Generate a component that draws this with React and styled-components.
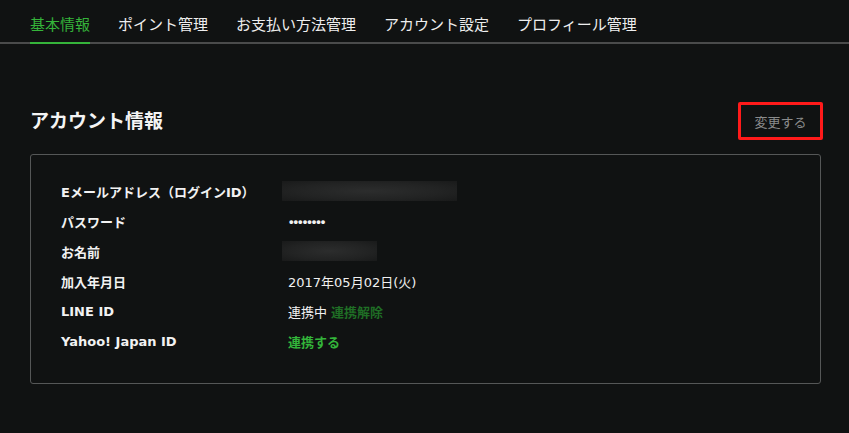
import React from "react";
import styled, { createGlobalStyle } from "styled-components";

const GlobalStyle = createGlobalStyle`
  body {
    margin: 0;
    background: #101212;
    font-family: "DejaVu Sans", "Noto Sans CJK JP", sans-serif;
    color: #f2f2f2;
  }
`;

const Page = styled.div`
  width: 849px;
  height: 433px;
  background: #101212;
  overflow: hidden;
`;

const TabBar = styled.nav`
  display: flex;
  gap: 28px;
  height: 42px;
  padding-left: 30px;
  border-bottom: 2px solid #4a4b4b;
`;

const Tab = styled.div`
  box-sizing: border-box;
  height: 44px;
  margin-bottom: -2px;
  padding-top: 13px;
  font-family: "Noto Sans CJK JP", sans-serif;
  font-size: 15px;
  color: ${p => (p.active ? "#35b43a" : "#eeeeee")};
  border-bottom: 2px solid ${p => (p.active ? "#35b43a" : "transparent")};
`;

const Content = styled.section`
  padding: 58px 28px 0 30px;
`;

const Header = styled.div`
  display: flex;
  align-items: center;
  justify-content: space-between;
  height: 38px;
  margin-bottom: 14px;
`;

const Title = styled.h2`
  margin: -3px 0 0;
  font-family: "Noto Sans CJK JP", sans-serif;
  font-size: 19px;
  font-weight: bold;
  color: #f4f4f4;
`;

const EditButton = styled.button`
  width: 85px;
  height: 38px;
  margin-right: -2px;
  background: transparent;
  border: 3px solid #ff1a1a;
  border-radius: 2px;
  color: #8a8b8b;
  font-family: "Noto Sans CJK JP", sans-serif;
  font-size: 13px;
  cursor: pointer;
`;

const Card = styled.div`
  border: 1px solid #555757;
  border-radius: 3px;
  padding: 21px 30px 27px;
`;

const Row = styled.div`
  display: grid;
  grid-template-columns: 227px 1fr;
  align-items: center;
  height: 30px;
  font-size: 13px;
`;

const Label = styled.div`
  font-weight: bold;
  color: #f2f2f2;
`;

const Value = styled.div`
  display: flex;
  align-items: center;
  gap: 4px;
  color: #f0f0f0;
`;

const Blurred = styled.div`
  width: ${p => p.w}px;
  height: 20px;
  margin-left: -6px;
  background: radial-gradient(ellipse at center, #2c2d2d 0%, #222323 60%, #191a1a 100%);
`;

const Dots = styled.span`
  font-family: "Liberation Sans", sans-serif;
  font-size: 13px;
  font-weight: bold;
  margin-left: 1px;
`;

const Link = styled.a`
  font-weight: bold;
  color: ${p => (p.dim ? "#1f6e25" : "#33b53a")};
  text-decoration: none;
  cursor: pointer;
`;

const tabs = ["基本情報", "ポイント管理", "お支払い方法管理", "アカウント設定", "プロフィール管理"];

export default function App() {
  return (
    <Page>
      <GlobalStyle />
      <TabBar>
        {tabs.map((t, i) => (
          <Tab key={t} active={i === 0}>
            {t}
          </Tab>
        ))}
      </TabBar>
      <Content>
        <Header>
          <Title>アカウント情報</Title>
          <EditButton>変更する</EditButton>
        </Header>
        <Card>
          <Row>
            <Label>Eメールアドレス（ログインID）</Label>
            <Value>
              <Blurred w={175} />
            </Value>
          </Row>
          <Row>
            <Label>パスワード</Label>
            <Value>
              <Dots>••••••••</Dots>
            </Value>
          </Row>
          <Row>
            <Label>お名前</Label>
            <Value>
              <Blurred w={95} />
            </Value>
          </Row>
          <Row>
            <Label>加入年月日</Label>
            <Value>2017年05月02日(火)</Value>
          </Row>
          <Row>
            <Label>LINE ID</Label>
            <Value>
              連携中 <Link dim>連携解除</Link>
            </Value>
          </Row>
          <Row>
            <Label>Yahoo! Japan ID</Label>
            <Value>
              <Link>連携する</Link>
            </Value>
          </Row>
        </Card>
      </Content>
    </Page>
  );
}
